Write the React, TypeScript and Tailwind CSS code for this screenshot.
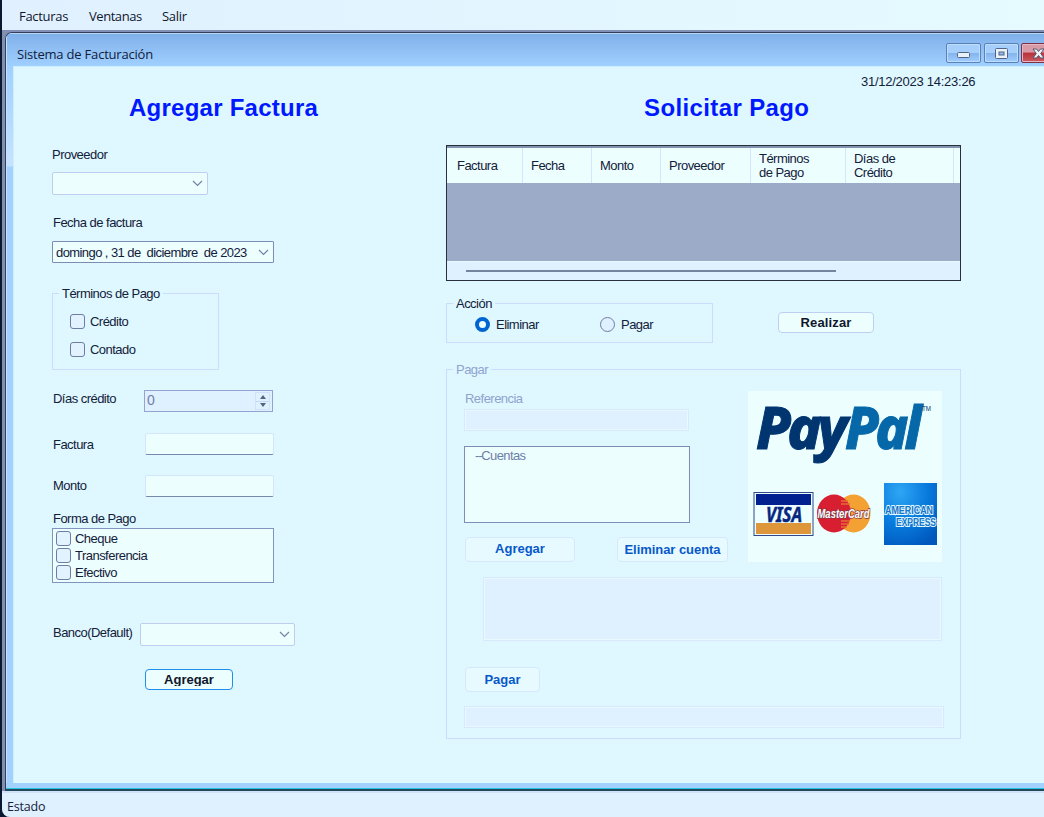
import React from 'react';

function Chevron() {
  return (
    <svg width="11" height="7" viewBox="0 0 11 7" fill="none" stroke="#7482a8" strokeWidth="1.2">
      <path d="M1 1 L5.5 5.5 L10 1" />
    </svg>
  );
}

function Check({ label, gap = 'gap-[5px]' }: { label: string; gap?: string }) {
  return (
    <div className={`flex items-center ${gap}`}>
      <span className="h-[15px] w-[15px] rounded-[3px] border border-[#6f7da3] bg-[#e2f2ff]" />
      <span>{label}</span>
    </div>
  );
}

function Group({ title, className, muted, children }: { title: string; className: string; muted?: boolean; children: React.ReactNode }) {
  return (
    <div className={`relative border border-[#cbdcfc] ${className}`}>
      <span className={`absolute -top-[8px] left-[6px] bg-[#dff8ff] px-[3px] leading-[16px] ${muted ? 'text-[#8fa3cf]' : ''}`}>{title}</span>
      {children}
    </div>
  );
}

const columns = [
  { name: 'Factura', cls: 'w-[76px]' },
  { name: 'Fecha', cls: 'w-[69px]' },
  { name: 'Monto', cls: 'w-[69px]' },
  { name: 'Proveedor', cls: 'w-[90px]' },
  { name: 'Términos\nde Pago', cls: 'w-[95px]' },
  { name: 'Días de\nCrédito', cls: 'w-[108px]' },
];

function MenuBar() {
  return (
    <div className="flex h-[30px] items-center gap-[20px] bg-gradient-to-r from-[#e0f0ff] to-[#e5fbff] pl-[17px] pt-[3px] font-['Open_Sans',sans-serif] text-[13px] text-[#10172c]">
      <span className="w-[50px] tracking-[-0.3px]">Facturas</span>
      <span className="w-[53px] tracking-[-0.45px]">Ventanas</span>
      <span className="tracking-[-0.3px]">Salir</span>
    </div>
  );
}

function TitleBar() {
  const btn = 'flex h-[20px] w-[35px] shrink-0 items-center justify-center rounded-[2px] border border-[#5881b8] shadow-[inset_0_0_0_1px_#bfddff]';
  return (
    <div className="flex h-[32px] items-start bg-gradient-to-b from-[#80b0e9] to-[#a0d0ff] pl-[10px]">
      <span className="w-[929px] shrink-0 pt-[10px] font-['Open_Sans',sans-serif] text-[13px] leading-[20px] tracking-[-0.2px] text-[#10203c]">Sistema de Facturación</span>
      <div className="flex gap-[3px] pt-[9px]">
        <span className={`${btn} bg-[linear-gradient(#a6cffb_50%,#82b3ec_50%,#a2ceff)]`}>
          <svg className="mt-[3px]" width="13" height="6"><rect x=".5" y=".5" width="12" height="5" rx="1" fill="#e8f2f8" stroke="#526486" /></svg>
        </span>
        <span className={`${btn} bg-[linear-gradient(#a6cffb_50%,#82b3ec_50%,#a2ceff)]`}>
          <svg width="13" height="11"><rect x=".5" y=".5" width="12" height="10" rx="1" fill="#e8f2f8" stroke="#526486" /><rect x="4" y="4" width="5" height="3" fill="#92bbea" stroke="#526486" /></svg>
        </span>
        <span className="-ml-px flex h-[20px] w-[35px] shrink-0 items-center justify-center rounded-[2px] border border-[#7a3046] bg-[linear-gradient(#d99aa8_45%,#b83238_50%,#cc5a62)] shadow-[inset_0_0_0_1px_#e8b6c2]">
          <svg width="13" height="11" viewBox="0 0 13 11"><path d="M1 1h3.5l2 2.5 2-2.5H12L8.7 5.5 12 10H8.500l-2-2.500-2 2.500H1l3.300-4.500z" fill="#eef3f8" stroke="#53586f" /></svg>
        </span>
      </div>
    </div>
  );
}

function InvoiceForm() {
  return (
    <div className="w-[433px] shrink-0 pl-[39px]">
      <h1 className="mt-[25px] h-[32px] pl-[77px] text-[24px] font-bold leading-[31px] tracking-[0.25px] text-[#0018ff]">Agregar Factura</h1>
      <div className="mt-[22px] h-[16px] leading-[17px]">Proveedor</div>
      <div className="mt-[10px] flex h-[23px] w-[156px] items-center justify-end rounded-[2px] border border-[#bfcdf0] bg-[#edfeff] pr-[4px]"><Chevron /></div>
      <div className="mt-[19px] h-[16px] pl-[1px] leading-[17px]">Fecha de factura</div>
      <div className="mt-[11px] flex h-[22px] w-[222px] items-center justify-between rounded-[1px] border border-[#7e8db4] bg-[#edfeff] pl-[3px] pr-[4px]">
        <span className="whitespace-pre tracking-[-0.58px]">domingo , 31 de  diciembre  de 2023</span>
        <Chevron />
      </div>
      <Group title="Términos de Pago" className="mt-[30px] h-[77px] w-[167px]">
        <div className="flex flex-col gap-[13px] pl-[17px] pt-[20px]">
          <div className="h-[15px]"><Check label="Crédito" /></div>
          <div className="h-[15px]"><Check label="Contado" /></div>
        </div>
      </Group>
      <div className="mt-[20px] flex h-[23px]">
        <span className="w-[92px] pl-[1px] leading-[17px]">Días crédito</span>
        <div className="flex h-[22px] w-[129px] justify-between border border-[#92a4cf] bg-[#dff0ff] pl-[2px] pr-[2px] text-[#6f80a8]">
          <span className="text-[14px] leading-[19px]">0</span>
          <div className="my-px flex w-[15px] flex-col divide-y divide-[#c5d7f6] border border-[#d0e1fa]">
            <span className="flex flex-1 items-center justify-center"><svg width="6" height="4"><path d="M0 4L3 0L6 4Z" fill="#53637f" /></svg></span>
            <span className="flex flex-1 items-center justify-center"><svg width="6" height="4"><path d="M0 0L3 4L6 0Z" fill="#53637f" /></svg></span>
          </div>
        </div>
      </div>
      <div className="mt-[20px] flex h-[22px] items-center">
        <span className="w-[93px] pl-[1px]">Factura</span>
        <div className="h-[22px] w-[129px] rounded-[2px] border border-[#d4e6fb] border-b-[#7988ad] bg-[#edfeff]" />
      </div>
      <div className="mt-[20px] flex h-[22px]">
        <span className="w-[93px] pl-[1px] leading-[21px]">Monto</span>
        <div className="h-[22px] w-[129px] rounded-[2px] border border-[#d4e6fb] border-b-[#7988ad] bg-[#edfeff]" />
      </div>
      <div className="mt-[13px] h-[16px] pl-[1px] leading-[17px]">Forma de Pago</div>
      <div className="mt-[2px] flex h-[55px] w-[222px] flex-col gap-[2px] border border-[#8094be] bg-[#edfeff] pl-[3px] pt-[2px]">
        <div className="h-[15px]"><Check label="Cheque" gap="gap-[4px]" /></div>
        <div className="h-[15px]"><Check label="Transferencia" gap="gap-[4px]" /></div>
        <div className="h-[15px]"><Check label="Efectivo" gap="gap-[4px]" /></div>
      </div>
      <div className="mt-[40px] flex h-[23px]">
        <span className="w-[88px] pl-[1px] leading-[20px]">Banco(Default)</span>
        <div className="flex h-[23px] w-[155px] items-center justify-end rounded-[2px] border border-[#bfcdf0] bg-[#edfeff] pr-[4px]"><Chevron /></div>
      </div>
      <button className="ml-[93px] mt-[23px] flex h-[21px] w-[88px] justify-center rounded-[4px] border-[1.5px] border-[#218ee9] bg-[#edfeff] text-[13px] font-bold tracking-[0px] text-[#10172c]">
        <span className="h-[16px] overflow-hidden leading-[20px]">Agregar</span>
      </button>
    </div>
  );
}

function CardsPicture() {
  return (
    <svg width="194" height="171" viewBox="0 0 194 171" className="block tracking-normal">
      <rect width="194" height="171" fill="#edfeff" />
      <g fontFamily="'Noto Sans', sans-serif" fontWeight="800" fontStyle="italic" fontSize="59" strokeWidth="1" letterSpacing="-4">
        <text x="97" y="58" fill="#0668a8" stroke="#0668a8" textLength="73" lengthAdjust="spacingAndGlyphs">Pal</text>
        <text x="8" y="58" fill="#003570" stroke="#003570" textLength="88" lengthAdjust="spacingAndGlyphs">Pay</text>
      </g>
      <text x="174" y="20" fontFamily="Liberation Sans" fontSize="7" fill="#003570" textLength="9" lengthAdjust="spacingAndGlyphs">TM</text>
      <rect x="6" y="101.500" width="59" height="43" fill="#edfeff" stroke="#31478a" />
      <rect x="8" y="103" width="55" height="11" fill="#002090" />
      <rect x="8" y="132" width="55" height="11" fill="#de963a" />
      <text x="18" y="130.500" fontFamily="Noto Sans" fontWeight="700" fontStyle="italic" fontSize="20.500" fill="#07267f" stroke="#07267f" strokeWidth=".5" textLength="36" lengthAdjust="spacingAndGlyphs">VISA</text>
      <ellipse cx="105.500" cy="122.500" rx="17" ry="19" fill="#f4a133" />
      <ellipse cx="86" cy="122.500" rx="17" ry="19" fill="#d81f32" />
      <path d="M93 110h7M93 113h9M93 130h9M93 133h8M93 136h6" stroke="#e86d37" strokeWidth="1.300" />
      <text x="69.500" y="127" fontFamily="Liberation Sans" fontWeight="bold" fontStyle="italic" fontSize="12.500" stroke="#8b3945" strokeWidth="1.500" paintOrder="stroke" fill="#f6ffff" textLength="52" lengthAdjust="spacingAndGlyphs">MasterCard</text>
      <defs>
        <radialGradient id="amex" cx=".3" cy=".15" r=".95">
          <stop offset="0" stopColor="#2fa6f4" /><stop offset=".55" stopColor="#087add" /><stop offset="1" stopColor="#0058bd" />
        </radialGradient>
      </defs>
      <rect x="136" y="92" width="53" height="62" fill="url(#amex)" />
      <g fontFamily="Liberation Sans" fontWeight="bold" fontSize="11.500" fill="#1673c8" stroke="#dff8ff" strokeWidth="2.200" paintOrder="stroke">
        <text x="137" y="122.500" textLength="48" lengthAdjust="spacingAndGlyphs">AMERICAN</text>
        <text x="148" y="135" textLength="40" lengthAdjust="spacingAndGlyphs">EXPRESS</text>
      </g>
    </svg>
  );
}

function PaymentPanel() {
  const blue = 'flex items-center justify-center rounded-[4px] border border-[#d6e9fc] bg-[#e7faff] text-[13px] font-bold tracking-[0px] text-[#0759c9]';
  const disabled = 'border border-[#d8e9fc] bg-[#dff0ff] shadow-[inset_0_0_0_1px_#eaf9ff]';
  return (
    <div className="w-[598px] shrink-0">
      <div className="mt-[7px] h-[16px] pl-[415px] leading-[16px] tracking-[-0.26px]">31/12/2023 14:23:26</div>
      <h1 className="mt-[2px] h-[32px] pl-[198px] text-[24px] font-bold leading-[31px] tracking-[0.38px] text-[#0018ff]">Solicitar Pago</h1>
      <div className="mt-[21px] flex h-[136px] w-[515px] flex-col border border-[#28303d] bg-[#9cabc7]">
        <div className="flex h-[37px] border-t-2 border-[#8294ad] bg-[#edfeff]">
          {columns.map((c) => (
            <div key={c.name} className={`flex shrink-0 items-center whitespace-pre border-r border-[#d4e5fc] pl-[8px] pt-px leading-[14px] first:pl-[10px] ${c.cls}`}>{c.name}</div>
          ))}
        </div>
        <div className="flex-1" />
        <div className="flex h-[19px] border-t border-[#eaf9ff] bg-[#dff0ff] pl-[19px] pt-[8px]"><div className="h-[2px] w-[370px] bg-[#74849f]" /></div>
      </div>
      <div className="mt-[22px] flex">
        <Group title="Acción" className="h-[40px] w-[267px]">
          <div className="flex pl-[28px] pt-[13px]">
            <span className="flex w-[125px] items-center gap-[6px]"><i className="h-[15px] w-[15px] rounded-full border-[4.5px] border-[#0064d3] bg-[#edfeff]" />Eliminar</span>
            <span className="flex items-center gap-[6px]"><i className="h-[15px] w-[15px] rounded-full border border-[#6f7da3] bg-[#dff0ff]" />Pagar</span>
          </div>
        </Group>
        <button className="ml-[65px] mt-[9px] flex h-[21px] w-[96px] items-center justify-center rounded-[4px] border border-[#bed0f2] bg-[#edfeff] text-[13px] font-bold tracking-[0.15px] text-[#10172c]">Realizar</button>
      </div>
      <Group title="Pagar" muted className="mt-[26px] h-[370px] w-[515px]">
        <div className="flex h-[192px] justify-between pl-[17px] pr-[18px] pt-[21px]">
          <div className="w-[264px]">
            <div className="h-[16px] pl-[1px] leading-[16px] text-[#8fa3cf]">Referencia</div>
            <div className={`mt-[2px] h-[22px] w-[225px] ${disabled}`} />
            <div className="mt-[15px] h-[77px] w-[226px] border border-[#7e8db4] bg-[#edfeff] pl-[10px] pt-[1px] leading-[16px] tracking-[-0.6px] text-[#6e7fa7]"><span className="tracking-[-1.2px]">--</span>Cuentas</div>
            <div className="mt-[14px] flex gap-[42px] pl-[1px]">
              <div className={`${blue} h-[25px] w-[110px] pb-[3px]`}>Agregar</div>
              <div className={`${blue} h-[25px] w-[111px]`}><span className="whitespace-nowrap tracking-[-0.05px]">Eliminar cuenta</span></div>
            </div>
          </div>
          <div><CardsPicture /></div>
        </div>
        <div className={`ml-[36px] mt-[15px] h-[64px] w-[459px] ${disabled}`} />
        <div className={`${blue} ml-[18px] mt-[26px] h-[25px] w-[75px]`}>Pagar</div>
        <div className={`ml-[17px] mt-[14px] h-[22px] w-[480px] ${disabled}`} />
      </Group>
    </div>
  );
}

export default function App() {
  return (
    <div className="flex h-[817px] w-[1044px] overflow-hidden bg-[#0a1830] font-['Liberation_Sans',Arial,sans-serif] text-[13px] leading-[15px] tracking-[-0.53px] text-[#13203a]">
      <div className="w-[2px] shrink-0" />
      <div className="flex w-[1042px] shrink-0 flex-col overflow-hidden rounded-bl-[8px] bg-[#8290b0]">
        <MenuBar />
        <div className="h-[2px] bg-[#8190b4]" />
        <div className="ml-[3px] flex h-[759px] flex-col overflow-hidden rounded-tl-[7px] border-l border-t border-[#343e60] bg-[#a3d1ff]">
          <div className="h-px shrink-0 bg-[#b5d5f0]" />
          <div className="flex h-[749px] shrink-0">
            <div className="w-[7px] shrink-0 border-l border-[#c3e3ff] bg-[linear-gradient(#80b0e9_0px,#a0d0ff_32px,#c7e2ff_132px,#a3d1ff_133px)]" />
            <div className="w-[1031px] overflow-hidden">
              <div className="-ml-[6px] w-[1040px]"><TitleBar /></div>
              <div className="flex h-[717px] bg-[#dff8ff] pt-px shadow-[inset_1px_1px_0_#cceeff]">
                <InvoiceForm />
                <PaymentPanel />
              </div>
            </div>
          </div>
          <div className="mt-auto h-px shrink-0 bg-[#25c5e3]" />
          <div className="h-[2px] shrink-0 bg-[#24485c]" />
        </div>
        <div className="flex flex-1 items-center border-t-2 border-[#d0e2fa] bg-[#dff0ff] pl-[5px] pt-[3px] font-['Open_Sans',sans-serif] text-[12.5px] tracking-[-0.2px]">Estado</div>
      </div>
    </div>
  );
}
